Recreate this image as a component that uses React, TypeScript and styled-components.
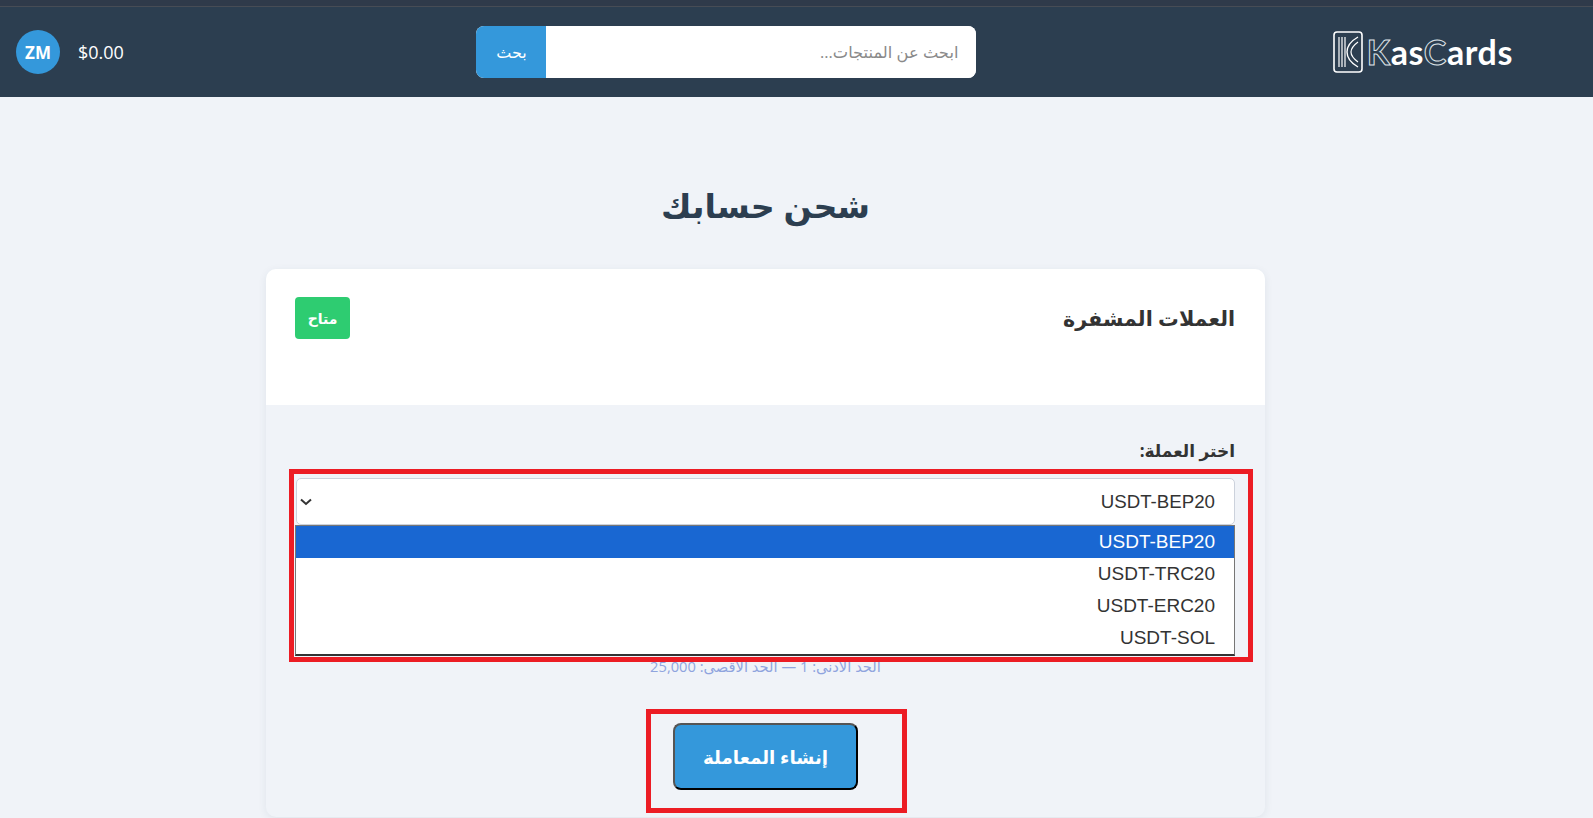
import React from "react";
import styled, { createGlobalStyle } from "styled-components";

const Global = createGlobalStyle`
  html, body { margin: 0; padding: 0; height: 818px; overflow: hidden; background: #f0f3f8; }
  body { font-family: "Open Sans", "Noto Sans", "DejaVu Sans", sans-serif; color: #333; }
  * { box-sizing: border-box; }
`;
const Page = styled.div`height: 818px; overflow: hidden;`;
const TopStrip = styled.div`height: 7px; background: #2f3a4a; border-bottom: 1px solid #474c55;`;
const Header = styled.header`
  height: 90px; background: #2c3e50; display: flex; align-items: center; justify-content: space-between;
  padding: 0 80px 0 16px;
`;
const Brand = styled.div`width: 184px; display: flex; align-items: center; justify-content: flex-start;`;
const BrandRow = styled.div`display: flex; align-items: center; gap: 4px; direction: ltr;`;
const BrandName = styled.span`
  font-family: "Lato", sans-serif; font-size: 34px; font-weight: 700; color: #fff; letter-spacing: 0.6px; line-height: 1;
`;
const BrandStriped = styled.span`color: transparent; -webkit-text-stroke: 1px #dfe4e8;`;
const SearchForm = styled.form`width: 500px; height: 52px; display: flex; border-radius: 8px; overflow: hidden; background: #fff;`;
const SearchInput = styled.input`
  flex: 1; min-width: 0; border: 0; outline: 0; padding: 0 18px; font: inherit; font-size: 16.3px; background: #fff; color: #333;
  &::placeholder { color: #8a8a8a; opacity: 1; }
`;
const SearchButton = styled.button`width: 70px; border: 0; background: #3498db; color: #fff; font: inherit; font-size: 16px; padding: 0;`;
const UserBox = styled.div`display: flex; align-items: center; gap: 18px; direction: ltr;`;
const Avatar = styled.div`
  width: 44px; height: 44px; border-radius: 50%; background: #3498db; color: #fff; font-weight: 700; font-size: 17px;
  display: flex; align-items: center; justify-content: center;
`;
const Balance = styled.span`color: #fff; font-size: 18px;`;
const Main = styled.main`padding: 0 62px 0 0; display: flex; flex-direction: column; align-items: center;`;
const Title = styled.h1`
  margin: 0; height: 172px; padding-top: 78px; font-size: 33.3px; line-height: 60px; font-weight: 700; color: #2c3e50;
`;
const Card = styled.section`width: 999px; height: 548px; border-radius: 10px; background: #f0f3f8; box-shadow: 0 2px 8px rgba(40,60,90,0.08);`;
const CardHead = styled.div`
  height: 136px; background: #fff; border-radius: 10px 10px 0 0; padding: 28px 30px 0 29px;
  display: flex; align-items: flex-start; justify-content: space-between;
`;
const CardTitle = styled.h2`margin: 0; font-size: 20.7px; line-height: 42px; font-weight: 700; color: #333;`;
const Badge = styled.span`
  width: 55px; height: 42px; border-radius: 4px; background: #2ecc71; color: #fff; font-size: 14px; font-weight: 700;
  display: flex; align-items: center; justify-content: center;
`;
const CardBody = styled.div`padding: 34px 30px 0 30px;`;
const FieldLabel = styled.label`display: block; font-size: 17px; line-height: 24px; height: 39px; font-weight: 700; color: #333;`;
const SelectField = styled.div`position: relative; height: 47px;`;
const SelectBox = styled.div`
  height: 47px; background: #fff; border: 1px solid #ccd2dc; border-radius: 5px; padding: 0 19px 0 3px;
  display: flex; align-items: center; justify-content: space-between;
  font-family: "Liberation Sans", Arial, sans-serif; font-size: 18.7px; color: #333; direction: ltr; flex-direction: row-reverse;
  & > svg { display: block; }
`;
const OptionList = styled.ul`
  position: absolute; top: 47px; left: -1px; right: 0; margin: 0; padding: 0; list-style: none; background: #fff;
  border: 1px solid #767676; border-bottom: 2px solid #333;
  font-family: "Liberation Sans", Arial, sans-serif; font-size: 19px; color: #333;
`;
const OptionItem = styled.li<{ $selected?: boolean }>`
  height: 32px; line-height: 32px; padding: 0 19px; direction: ltr; text-align: right;
  background: ${p => (p.$selected ? "#1967d2" : "#fff")}; color: ${p => (p.$selected ? "#fff" : "#333")};
`;
const SelectMark = styled.div`
  position: absolute; top: -9px; left: -7px; right: -18px; height: 193px; border: 5px solid #ec1c24; pointer-events: none;
`;
const Hint = styled.p`margin: 131px 0 0; text-align: center; font-size: 14.7px; line-height: 20px; color: #8fa4de;`;
const ButtonRow = styled.div`display: flex; justify-content: center; margin-top: 47px;`;
const ButtonWrap = styled.div`position: relative;`;
const SubmitButton = styled.button`
  width: 185px; height: 67px; background: #3498db; color: #fff; font: inherit; font-size: 18.3px; font-weight: 700; border-radius: 8px;
  border: 2px solid; border-color: #555 #000 #000 #555; padding: 0; display: block;
`;
const ButtonMark = styled.div`
  position: absolute; top: -14px; left: -27px; width: 261px; height: 104px; border: 5px solid #ec1c24; pointer-events: none;
`;

const Chevron = () => (
  <svg width="12" height="8" viewBox="0 0 12 8" fill="none" stroke="#333" strokeWidth="2">
    <polyline points="1,1.5 6,6 11,1.5" />
  </svg>
);

export default function App() {
  return (
    <Page dir="rtl">
      <Global />
      <TopStrip />
      <Header>
        <Brand>
          <BrandRow>
            <svg width="30" height="42" viewBox="0 0 30 42" fill="none" stroke="#fff">
              <rect x="1" y="1" width="28" height="40" rx="3" strokeWidth="1.6" />
              <path d="M6 6v30M9 6v30M12 6v30" strokeWidth="1.2" />
              <path d="M25 6 C18 10 14 16 14 21 C14 26 18 32 25 36" strokeWidth="1.4" />
              <path d="M25 11 C21 14 18 18 18 21 C18 24 21 28 25 31" strokeWidth="1.2" />
            </svg>
            <BrandName><BrandStriped>K</BrandStriped>as<BrandStriped>C</BrandStriped>ards</BrandName>
          </BrandRow>
        </Brand>
        <SearchForm>
          <SearchInput placeholder="ابحث عن المنتجات..." />
          <SearchButton type="button">بحث</SearchButton>
        </SearchForm>
        <UserBox>
          <Avatar>ZM</Avatar>
          <Balance>$0.00</Balance>
        </UserBox>
      </Header>
      <Main>
        <Title>شحن حسابك</Title>
        <Card>
          <CardHead>
            <CardTitle>العملات المشفرة</CardTitle>
            <Badge>متاح</Badge>
          </CardHead>
          <CardBody>
            <FieldLabel>اختر العملة:</FieldLabel>
            <SelectField>
              <SelectBox>
                <span>USDT-BEP20</span>
                <Chevron />
              </SelectBox>
              <OptionList>
                <OptionItem $selected>USDT-BEP20</OptionItem>
                <OptionItem>USDT-TRC20</OptionItem>
                <OptionItem>USDT-ERC20</OptionItem>
                <OptionItem>USDT-SOL</OptionItem>
              </OptionList>
              <SelectMark />
            </SelectField>
            <Hint>الحد الأدنى: 1 — الحد الأقصى: 25,000</Hint>
            <ButtonRow>
              <ButtonWrap>
                <SubmitButton type="button">إنشاء المعاملة</SubmitButton>
                <ButtonMark />
              </ButtonWrap>
            </ButtonRow>
          </CardBody>
        </Card>
      </Main>
    </Page>
  );
}
